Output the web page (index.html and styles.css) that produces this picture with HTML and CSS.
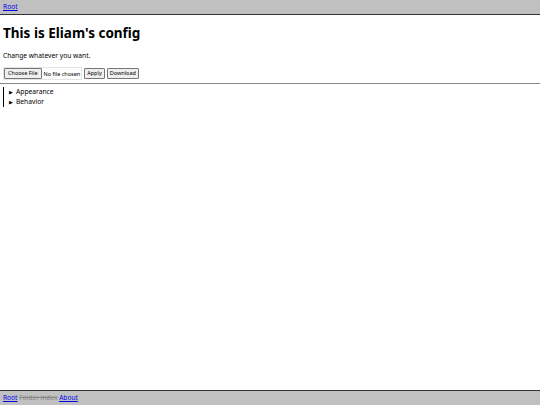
FILE: index.html
```html
<!DOCTYPE html>
<html>
<head>
<meta charset="utf-8">
<link rel="stylesheet" href="styles.css">
</head>
<body>
<div class="page">
  <header class="topbar"><a href="#">Root</a></header>
  <main class="content">
    <h1 class="title">This is Eliam's config</h1>
    <p class="lead">Change whatever you want.</p>
    <form class="controls">
      <span class="file"><span class="btn btn-file">Choose File</span><span class="file-label">No file chosen</span></span>
      <span class="btn">Apply</span>
      <span class="btn">Download</span>
    </form>
    <hr class="rule">
    <div class="tree">
      <div class="item"><span class="arrow">&#9654;</span>Appearance</div>
      <div class="item"><span class="arrow">&#9654;</span>Behavior</div>
    </div>
  </main>
  <footer class="bottombar"><a href="#">Root</a> <span class="disabled">Folder index</span> <a href="#">About</a></footer>
</div>
</body>
</html>
```
FILE: styles.css
```css
html, body {
  margin: 0;
  padding: 0;
  height: 100%;
}
body {
  font-family: "Noto Sans", sans-serif;
  font-size: 6.7px;
  color: #000;
  background: #fff;
}
a { color: #0000ee; }
.page {
  display: flex;
  flex-direction: column;
  height: 100%;
}
.topbar {
  background: #c0c0c0;
  border-bottom: 1px solid #333;
  height: 14px;
  line-height: 14px;
  padding-left: 3px;
}
.content {
  flex: 1;
  padding: 0 3px;
}
.title {
  font-size: 13.5px;
  font-weight: bold;
  margin: 9px 0 0 0;
  line-height: 18px;
}
.lead {
  margin: 9px 0 0 0;
  line-height: 9px;
}
.controls {
  display: flex;
  align-items: center;
  gap: 2px;
  margin: 7px 0 0 0;
  height: 13px;
}
.file {
  display: flex;
  align-items: center;
  border: 1px solid #e4e4e4;
  height: 11px;
  padding-right: 1px;
}
.file-label {
  font-size: 5.5px;
  margin-left: 2px;
}
.btn {
  font-size: 5.5px;
  border: 1px solid #767676;
  background: #efefef;
  padding: 0 2px;
  height: 9px;
  line-height: 9px;
  border-radius: 1px;
}
.btn-file {
  padding: 0 3px;
}
.rule {
  border: 0;
  border-top: 1px solid #888;
  margin: 3px -3px 0 -3px;
}
.tree {
  border-left: 1px solid #000;
  margin: 3px 0 0 0;
  padding-left: 5px;
}
.item {
  line-height: 9px;
}
.arrow {
  font-size: 5px;
  margin-right: 3px;
}
.bottombar {
  background: #c0c0c0;
  border-top: 1px solid #333;
  height: 14px;
  line-height: 14px;
  padding-left: 3px;
  font-size: 6.6px;
}
.disabled {
  color: #888;
  text-decoration: line-through;
}
```
